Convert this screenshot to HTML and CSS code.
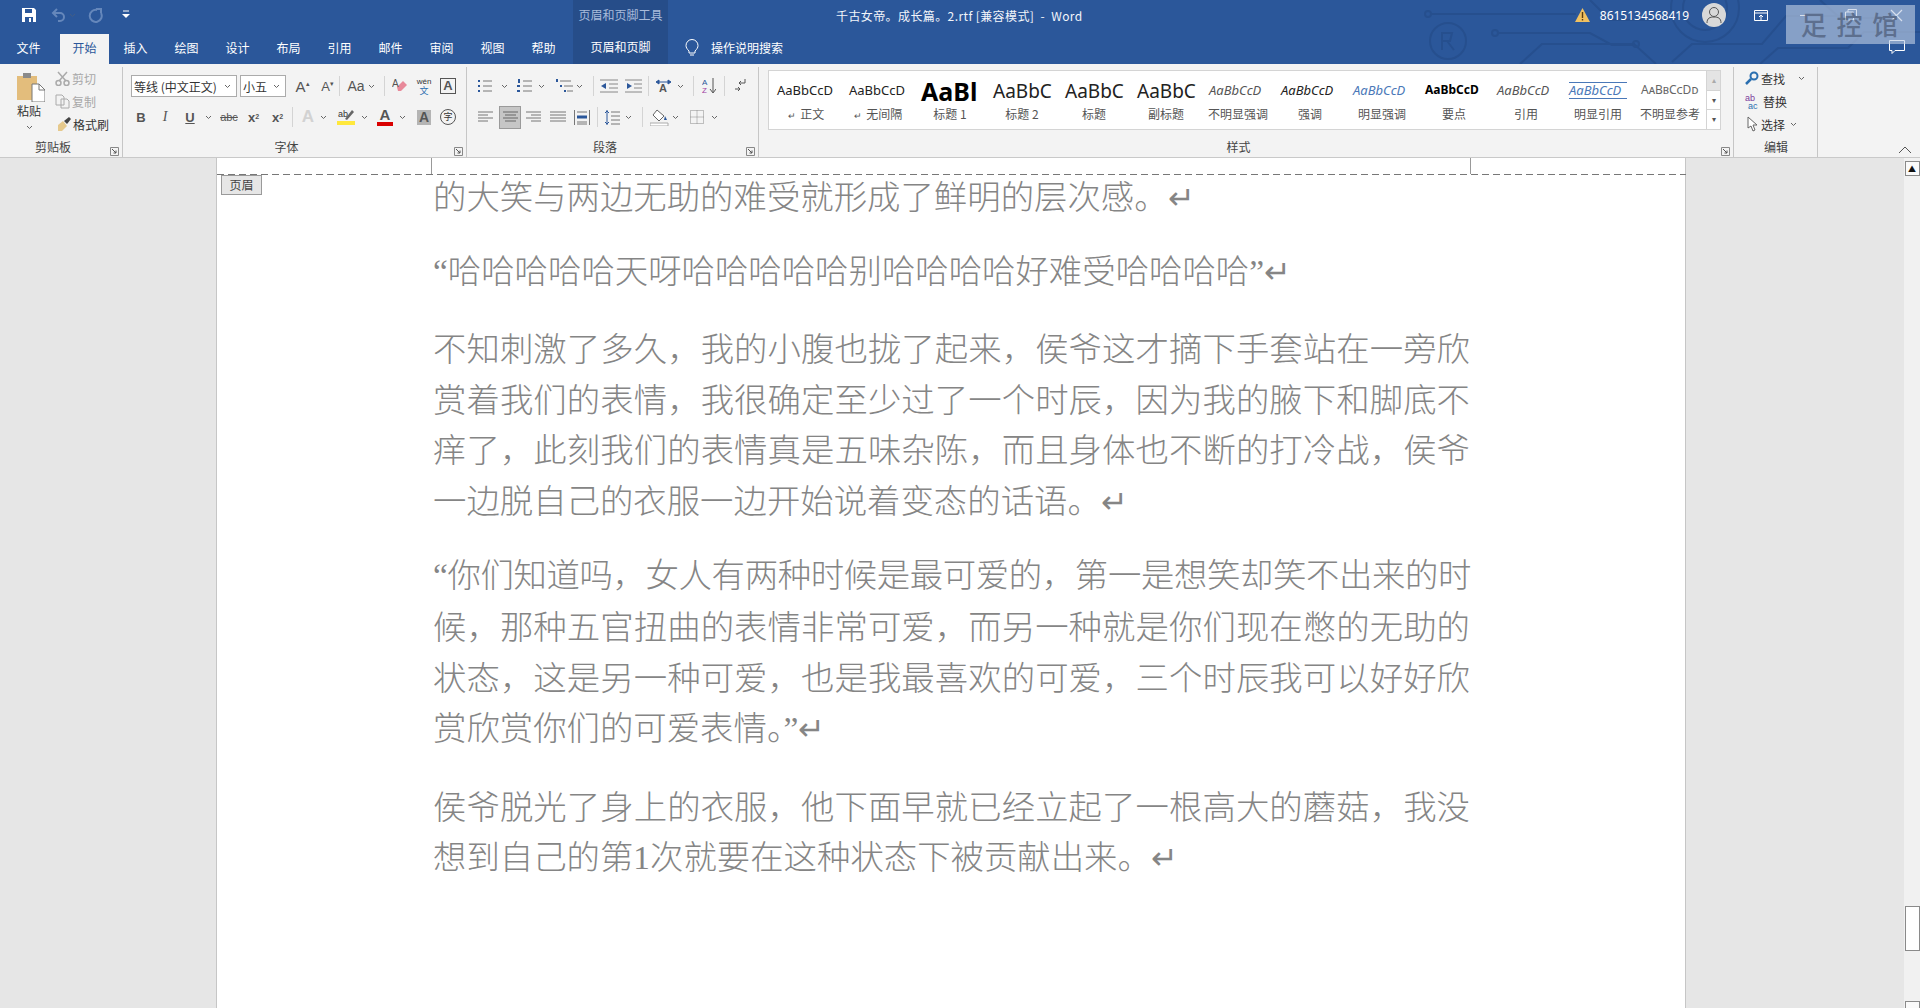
FILE: index.html
```html
<!DOCTYPE html>
<html lang="zh-CN">
<head>
  <meta charset="UTF-8">
  <title>千古女帝。成长篇。2.rtf [兼容模式] - Word</title>
  <link rel="stylesheet" href="styles.css">
</head>
<body>
  <svg class="defs" width="0" height="0">
    <symbol id="car" viewBox="0 0 7 7"><path d="M1 2l2.500 2.500L6 2" fill="none" stroke="#666" stroke-width="1"/></symbol>
    <symbol id="launch" viewBox="0 0 9 9"><path d="M.5 .5h8v8h-8z" fill="none" stroke="#888"/><path d="M2 2l4 4M6 3.500v2.500H3.500" fill="none" stroke="#555"/></symbol>
  </svg>

  <header class="top">
    <svg class="circuit" width="520" height="64" viewBox="0 0 520 64" fill="none" stroke="#264f8e" stroke-width="2">
      <circle cx="28" cy="14" r="3"/><path d="M31 14h145"/>
      <circle cx="48" cy="41" r="18"/><path d="M42 50V33h10l-2 8h-8M47 41l7 9"/>
      <circle cx="95" cy="33" r="3"/><path d="M98 33h92l22 12h22"/>
      <path d="M120 64l22-20h92l22 20"/><circle cx="236" cy="44" r="3"/>
      <circle cx="305" cy="8" r="22"/><circle cx="305" cy="8" r="34"/>
      <path d="M190 0l20 20h60M272 62l20-18h70l24-28h70M360 64l18-16h70l16-16h56M420 0l20 18h60"/>
    </svg>

    <div class="title-row">
      <div class="qat">
        <svg class="qat-save" width="16" height="16" viewBox="0 0 16 16"><path d="M1 1h12l2 2v12H1z" fill="#fff"/><path d="M4 2h7v4H4z" fill="#2b579a"/><path d="M4 10h8v5H4z" fill="#2b579a"/><path d="M8 11h2v4H8z" fill="#fff"/></svg>
        <svg class="qat-undo" width="16" height="14" viewBox="0 0 16 14" fill="none" stroke="#6587bb" stroke-width="2"><path d="M6 1L2 5l4 4"/><path d="M3 5h6a4 4 0 0 1 0 8H7"/></svg>
        <svg class="qat-car" width="7" height="7"><use href="#car"/></svg>
        <svg class="qat-redo" width="15" height="15" viewBox="0 0 15 15" fill="none" stroke="#6587bb" stroke-width="2"><path d="M9 2a6 6 0 1 0 4 3"/><path d="M8 1h5v4"/></svg>
        <svg class="qat-more" width="8" height="10" viewBox="0 0 8 10"><path d="M1 1h6" stroke="#fff"/><path d="M0 4h8L4 8z" fill="#fff"/></svg>
      </div>
      <div class="tool-label">页眉和页脚工具</div>
      <div class="doc-title">千古女帝。成长篇。2.rtf [兼容模式]&nbsp; -&nbsp; Word</div>
      <div class="account">
        <svg width="15" height="14" viewBox="0 0 15 14"><path d="M7.500 0L15 14H0z" fill="#f0c060"/><path d="M6.800 4h1.400v6H6.800zM6.800 11h1.400v1.500H6.800z" fill="#5a3c10"/></svg>
        <span class="phone">8615134568419</span>
        <span class="avatar"><svg width="16" height="18" viewBox="0 0 16 18" fill="none" stroke="#555"><circle cx="8" cy="6" r="4.500"/><path d="M1 17c0-5 3-6 7-6s7 1 7 6"/></svg></span>
        <svg class="display-btn" width="14" height="11" viewBox="0 0 14 11" fill="none" stroke="#fff"><path d="M.5 .5h13v10H.5zM.5 3h13M7 5v5M5 7l2-2 2 2"/></svg>
        <div class="win-btns">
          <span class="win-min"></span>
          <svg width="12" height="12" viewBox="0 0 12 12" fill="none" stroke="#fff"><path d="M.5 3h8v8h-8zM3 3V.5h8.500V8H9"/></svg>
          <svg width="13" height="13" viewBox="0 0 13 13" stroke="#fff" stroke-width="1.200"><path d="M1 1l11 11M12 1L1 12"/></svg>
        </div>
      </div>
    </div>

    <nav class="tab-row">
      <span class="tab tab-file">文件</span>
      <span class="tab tab-active">开始</span>
      <span class="tab">插入</span>
      <span class="tab">绘图</span>
      <span class="tab">设计</span>
      <span class="tab">布局</span>
      <span class="tab">引用</span>
      <span class="tab">邮件</span>
      <span class="tab">审阅</span>
      <span class="tab">视图</span>
      <span class="tab">帮助</span>
      <span class="tab tab-tool">页眉和页脚</span>
      <svg class="bulb" width="14" height="18" viewBox="0 0 14 18" fill="none" stroke="#fff"><path d="M4 12C2 10 1 8.500 1 6.500a6 6 0 0 1 12 0C13 8.500 12 10 10 12v2H4zM5 16h4"/></svg>
      <span class="search">操作说明搜索</span>
      <svg class="comment" width="16" height="15" viewBox="0 0 16 15" fill="none" stroke="#fff"><path d="M.5 .5h15v10H6l-3 3v-3H.5z"/></svg>
    </nav>
    <div class="stamp">足 控 馆</div>
  </header>

  <section class="ribbon">
    <div class="group g-clip">
      <div class="g-body clip-body">
        <div class="paste">
          <svg width="28" height="30" viewBox="0 0 28 30"><path d="M0 4h20v24H0z" fill="#e3bd7c"/><path d="M6 1h8v5H6z" fill="#8a8a8a"/><path d="M15 12h7l6 6v12H15z" fill="#fff" stroke="#777"/><path d="M22 12v6h6" fill="none" stroke="#777"/></svg>
          <span class="paste-lab">粘贴</span>
          <svg width="7" height="7"><use href="#car"/></svg>
        </div>
        <div class="stack">
          <div class="mini off"><svg width="15" height="15" viewBox="0 0 15 15" fill="none" stroke="#aaa" stroke-width="1.500"><path d="M3 1l8 9M12 1L4 10"/><circle cx="3.500" cy="12" r="2.500"/><circle cx="11.500" cy="12" r="2.500"/></svg><span>剪切</span></div>
          <div class="mini off"><svg width="15" height="15" viewBox="0 0 15 15" fill="none" stroke="#aaa"><path d="M1 1h6l2 2v8H1zM6 5h6l2 2v7H6z"/></svg><span>复制</span></div>
          <div class="mini"><svg width="16" height="15" viewBox="0 0 16 15"><path d="M3 8l5-4 4 5-5 5H3z" fill="#e6c98c"/><path d="M9 4l5-4 2 2-4 5z" fill="#444"/></svg><span>格式刷</span></div>
        </div>
      </div>
      <div class="g-label">剪贴板</div>
      <svg class="launch" width="9" height="9"><use href="#launch"/></svg>
    </div>

    <div class="group g-font">
      <div class="g-body">
        <div class="row">
          <div class="select w106"><span>等线 (中文正文)</span><svg width="7" height="7"><use href="#car"/></svg></div>
          <div class="select w46 m3"><span>小五</span><svg width="7" height="7"><use href="#car"/></svg></div>
          <span class="glyph w15 m9 big">A<sup class="tri">▴</sup></span>
          <span class="glyph w15 m10">A<sup class="tri">▾</sup></span>
          <i class="sep m4"></i>
          <span class="glyph aa m7">Aa<svg width="7" height="7"><use href="#car"/></svg></span>
          <i class="sep m9"></i>
          <svg class="m7" width="16" height="16" viewBox="0 0 16 16"><path d="M5 9l6-6 4 4-6 6H6z" fill="#e8899a"/><text x="0" y="9" class="eraser-a">A</text></svg>
          <span class="wen m8"><b>wén</b><em>文</em></span>
          <span class="boxa m8">A</span>
        </div>
        <div class="row">
          <span class="glyph w10 m5 bold">B</span>
          <span class="glyph w10 m14 ital">I</span>
          <span class="glyph w10 m15 bold under">U</span>
          <svg class="m10" width="7" height="7"><use href="#car"/></svg>
          <span class="glyph w16 m9 abc">abc</span>
          <span class="glyph w13 m10 bold">x<sub>2</sub></span>
          <span class="glyph w13 m11 bold">x<sup>2</sup></span>
          <i class="sep m8"></i>
          <span class="glyph w14 m8 ghost">A</span>
          <svg class="m5" width="7" height="7"><use href="#car"/></svg>
          <svg class="m10" width="18" height="18" viewBox="0 0 18 18"><path d="M0 13h18v4H0z" fill="#ffe83c"/><text x="1" y="9" class="hl-text">ab</text><path d="M8 11l7-9 2 2-7 8z" fill="#666"/></svg>
          <svg class="m6" width="7" height="7"><use href="#car"/></svg>
          <span class="glyph w16 m9 red-a">A</span>
          <svg class="m6" width="7" height="7"><use href="#car"/></svg>
          <span class="glyph w14 m11 gray-a">A</span>
          <span class="ring m9">字</span>
        </div>
      </div>
      <div class="g-label">字体</div>
      <svg class="launch" width="9" height="9"><use href="#launch"/></svg>
    </div>

    <div class="group g-para">
      <div class="g-body">
        <div class="row">
          <svg class="w14" width="14" height="14" viewBox="0 0 14 14" stroke="#777"><path d="M5 2h9M5 7h9M5 12h9"/><path d="M0 1h2v2H0zM0 6h2v2H0zM0 11h2v2H0z" fill="#2b579a" stroke="none"/></svg>
          <svg class="m9" width="7" height="7"><use href="#car"/></svg>
          <svg class="m9" width="15" height="14" viewBox="0 0 15 14" stroke="#777"><path d="M6 2h9M6 7h9M6 12h9"/><path d="M1 0h2v4H1zM0 6h3v2H0zM0 11h3v2H0z" fill="#2b579a" stroke="none"/></svg>
          <svg class="m6" width="7" height="7"><use href="#car"/></svg>
          <svg class="m11" width="17" height="14" viewBox="0 0 17 14" stroke="#777"><path d="M4 2h11M8 7h9M11 12h6"/><path d="M0 0h2v3H0zM4 6h2v2H4zM8 11h2v2H8z" fill="#2b579a" stroke="none"/></svg>
          <svg class="m3" width="7" height="7"><use href="#car"/></svg>
          <i class="sep m10"></i>
          <svg class="m6" width="18" height="14" viewBox="0 0 18 14" stroke="#888"><path d="M0 1h18M9 5h9M9 9h9M0 13h18"/><path d="M6 4L1 7l5 3z" fill="#2b579a" stroke="none"/></svg>
          <svg class="m7" width="17" height="14" viewBox="0 0 17 14" stroke="#888"><path d="M0 1h17M9 5h8M9 9h8M0 13h17"/><path d="M2 4l5 3-5 3z" fill="#2b579a" stroke="none"/></svg>
          <i class="sep m6"></i>
          <svg class="m6" width="17" height="14" viewBox="0 0 17 14"><text x="4" y="13" class="dir-a">A</text><path d="M1 3l3-2v4zM16 3l-3-2v4zM4 3h9" fill="#2b579a" stroke="#2b579a"/></svg>
          <svg class="m5" width="7" height="7"><use href="#car"/></svg>
          <i class="sep m9"></i>
          <svg class="m8" width="14" height="16" viewBox="0 0 14 16"><text x="0" y="7" class="sort-a">A</text><text x="0" y="15" class="sort-z">Z</text><path d="M11 0v14M8 11l3 4 3-4" fill="none" stroke="#555"/></svg>
          <i class="sep m8"></i>
          <svg class="m10" width="11" height="14" viewBox="0 0 11 14" fill="none" stroke="#555"><path d="M10 0v4H4M6 2L4 4l2 2M0 10h5M3 8l2 2-2 2"/></svg>
        </div>
        <div class="row">
          <svg class="w15" width="15" height="12" viewBox="0 0 15 12" stroke="#777"><path d="M0 1h15M0 4h10M0 7h15M0 10h10"/></svg>
          <span class="align-on m6"><svg width="15" height="12" viewBox="0 0 15 12" stroke="#666"><path d="M0 1h15M2 4h11M0 7h15M2 10h11"/></svg></span>
          <svg class="m5" width="15" height="12" viewBox="0 0 15 12" stroke="#777"><path d="M0 1h15M5 4h10M0 7h15M5 10h10"/></svg>
          <svg class="m9" width="16" height="12" viewBox="0 0 16 12" stroke="#777"><path d="M0 1h16M0 4h16M0 7h16M0 10h16"/></svg>
          <svg class="m8" width="16" height="15" viewBox="0 0 16 15" stroke="#777" fill="none"><path d="M.5 0v15M15.500 0v15M3 2h10M3 12h10M3 14h10"/><path d="M3 7h10" stroke="#2b579a" stroke-width="3"/></svg>
          <i class="sep m7"></i>
          <svg class="m7" width="15" height="15" viewBox="0 0 15 15" fill="none"><path d="M6 2h9M6 6h9M6 10h9M6 14h9" stroke="#777"/><path d="M2 0v15M0 3l2-2 2 2M0 12l2 2 2-2" stroke="#2b579a"/></svg>
          <svg class="m5" width="7" height="7"><use href="#car"/></svg>
          <i class="sep m10"></i>
          <svg class="m7" width="20" height="17" viewBox="0 0 20 17"><path d="M7 1l7 6-5 5-6-6z" fill="#fff" stroke="#666"/><path d="M15 7l2 4-3 0z" fill="#2b579a"/><path d="M0 14h18v3H0z" fill="#fff" stroke="#aaa"/></svg>
          <svg class="m2" width="7" height="7"><use href="#car"/></svg>
          <svg class="m11" width="14" height="14" viewBox="0 0 14 14" fill="none" stroke="#888" stroke-dasharray="1 1"><path d="M.5 .5h13v13H.5zM7 .5v13M.5 7h13"/></svg>
          <svg class="m7" width="7" height="7"><use href="#car"/></svg>
        </div>
      </div>
      <div class="g-label">段落</div>
      <svg class="launch" width="9" height="9"><use href="#launch"/></svg>
    </div>

    <div class="group g-style">
      <div class="g-body">
        <div class="gallery">
          <div class="style-item"><span class="pv">AaBbCcD</span><span class="nm"><i>↵</i> 正文</span></div>
          <div class="style-item"><span class="pv">AaBbCcD</span><span class="nm"><i>↵</i> 无间隔</span></div>
          <div class="style-item"><span class="pv pv-h1">AaBl</span><span class="nm">标题 1</span></div>
          <div class="style-item"><span class="pv pv-h2">AaBbC</span><span class="nm">标题 2</span></div>
          <div class="style-item"><span class="pv pv-h2">AaBbC</span><span class="nm">标题</span></div>
          <div class="style-item"><span class="pv pv-h2">AaBbC</span><span class="nm">副标题</span></div>
          <div class="style-item"><span class="pv pv-it gray">AaBbCcD</span><span class="nm">不明显强调</span></div>
          <div class="style-item"><span class="pv pv-it">AaBbCcD</span><span class="nm">强调</span></div>
          <div class="style-item"><span class="pv pv-it blue">AaBbCcD</span><span class="nm">明显强调</span></div>
          <div class="style-item"><span class="pv pv-b">AaBbCcD</span><span class="nm">要点</span></div>
          <div class="style-item"><span class="pv pv-it gray">AaBbCcD</span><span class="nm">引用</span></div>
          <div class="style-item"><span class="pv pv-it blue lined">AaBbCcD</span><span class="nm">明显引用</span></div>
          <div class="style-item"><span class="pv pv-sc">AaBbCcDd</span><span class="nm">不明显参考</span></div>
          <div class="gallery-btns">
            <span class="off-btn">▴</span>
            <span>▾</span>
            <span>▾</span>
          </div>
        </div>
      </div>
      <div class="g-label">样式</div>
      <svg class="launch" width="9" height="9"><use href="#launch"/></svg>
    </div>

    <div class="group g-edit">
      <div class="g-body stack edit-stack">
        <div class="mini"><svg width="14" height="14" viewBox="0 0 14 14" fill="none" stroke="#2b6fb0" stroke-width="2"><circle cx="9" cy="5" r="3.500"/><path d="M6 8l-5 5" stroke-width="2.500"/></svg><span>查找</span><svg class="m11" width="7" height="7"><use href="#car"/></svg></div>
        <div class="mini"><svg width="16" height="15" viewBox="0 0 16 15"><text x="0" y="7" class="rep-ab">ab</text><text x="3" y="15" class="rep-ac">ac</text></svg><span>替换</span></div>
        <div class="mini"><svg width="14" height="16" viewBox="0 0 14 16"><path d="M3 1v11l3-2 2 5 2-1-2-5h4z" fill="#fff" stroke="#666"/></svg><span>选择</span><svg class="m3" width="7" height="7"><use href="#car"/></svg></div>
      </div>
      <div class="g-label">编辑</div>
    </div>

    <svg class="collapse" width="14" height="8" viewBox="0 0 14 8" fill="none" stroke="#555"><path d="M1 7l6-6 6 6"/></svg>
  </section>

  <main class="workspace">
    <div class="gutter"></div>
    <article class="page">
      <div class="header-strip">
        <span class="tick"></span>
      </div>
      <span class="header-tag">页眉</span>
      <div class="doc-text">
        <p><span class="last">的大笑与两边无助的难受就形成了鲜明的层次感。<i>↵</i></span></p>
        <p class="wide"><span class="last">“哈哈哈哈哈天呀哈哈哈哈哈别哈哈哈哈好难受哈哈哈哈”<i>↵</i></span></p>
        <p>
          <span>不知刺激了多久，我的小腹也拢了起来，侯爷这才摘下手套站在一旁欣</span>
          <span>赏着我们的表情，我很确定至少过了一个时辰，因为我的腋下和脚底不</span>
          <span>痒了，此刻我们的表情真是五味杂陈，而且身体也不断的打冷战，侯爷</span>
          <span class="last">一边脱自己的衣服一边开始说着变态的话语。<i>↵</i></span>
        </p>
        <p class="wide">
          <span class="tight">“你们知道吗，女人有两种时候是最可爱的，第一是想笑却笑不出来的时</span>
          <span>候，那种五官扭曲的表情非常可爱，而另一种就是你们现在憋的无助的</span>
          <span>状态，这是另一种可爱，也是我最喜欢的可爱，三个时辰我可以好好欣</span>
          <span class="last">赏欣赏你们的可爱表情。”<i>↵</i></span>
        </p>
        <p>
          <span>侯爷脱光了身上的衣服，他下面早就已经立起了一根高大的蘑菇，我没</span>
          <span class="last">想到自己的第1次就要在这种状态下被贡献出来。<i>↵</i></span>
        </p>
      </div>
    </article>
    <div class="gutter-r"></div>
    <aside class="scrollbar">
      <span class="sb-btn">▲</span>
      <span class="sb-thumb"></span>
      <span class="sb-btn sb-down">▬</span>
    </aside>
  </main>
</body>
</html>
```

FILE: styles.css
```css
* {
  box-sizing: border-box;
}

html, body {
  margin: 0;
  height: 100%;
}

body {
  display: flex;
  flex-direction: column;
  overflow: hidden;
  font-family: "Noto Sans CJK SC", "Noto Sans", sans-serif;
  font-size: 12px;
  color: #333;
  background-color: #e6e6e6;
}

.defs {
  position: absolute;
}

svg {
  flex: none;
  display: block;
}

/* title bar */
.top {
  position: relative;
  height: 64px;
  flex: none;
  background-color: #2b579a;
  color: #fff;
  overflow: hidden;
}

.circuit {
  position: absolute;
  left: 1400px;
  top: 0;
}

.title-row, .tab-row {
  position: relative;
  display: flex;
  align-items: center;
  height: 32px;
}

.title-row { padding-bottom: 2px; }
.tab-row { padding-bottom: 1px; }

.qat {
  display: flex;
  align-items: center;
  width: 573px;
  padding-left: 21px;
}

.qat-undo { margin-left: 14px; }
.qat-car { margin-left: 2px; opacity: .4; }
.qat-redo { margin-left: 12px; }
.qat-more { margin-left: 19px; }

.tool-label {
  width: 95px;
  height: 32px;
  margin-bottom: -2px;
  line-height: 30px;
  text-align: center;
  color: #a9bcdb;
  background-color: #264d89;
  white-space: nowrap;
}

.doc-title {
  margin-left: 168px;
  letter-spacing: .4px;
  color: #f2f5fa;
  white-space: nowrap;
}

.account {
  display: flex;
  align-items: center;
  margin-left: auto;
  padding-right: 17px;
}

.phone {
  margin-left: 10px;
  font-family: "Noto Sans", sans-serif;
}

.avatar {
  display: flex;
  align-items: center;
  justify-content: center;
  width: 24px;
  height: 24px;
  margin-left: 13px;
  border-radius: 50%;
  background-color: #d8d8d8;
}

.display-btn { margin-left: 28px; }

.win-btns {
  display: flex;
  align-items: center;
  gap: 33px;
  margin-left: 32px;
}

.win-min {
  width: 12px;
  height: 1px;
  background-color: #fff;
}

.tab {
  width: 51px;
  text-align: center;
  white-space: nowrap;
}

.tab-file { margin: 0 6px 0 3px; }

.tab-active {
  width: 49px;
  height: 30px;
  margin: 3px 1px 0 0;
  line-height: 28px;
  background-color: #f3f3f3;
  color: #2b579a;
}

.tab-tool {
  width: 95px;
  height: 32px;
  margin: 1px 0 0 4px;
  line-height: 30px;
  background-color: #264d89;
}

.bulb { margin-left: 17px; }
.search { margin-left: 12px; }
.comment { margin-left: auto; margin-right: 15px; }

.stamp {
  position: absolute;
  left: 1786px;
  top: 5px;
  width: 129px;
  height: 39px;
  text-align: center;
  font-size: 26px;
  font-weight: 500;
  letter-spacing: 2px;
  line-height: 38px;
  color: #5d6f8e;
  background-color: rgba(190, 205, 228, .62);
  white-space: nowrap;
}

/* ribbon */
.ribbon {
  position: relative;
  display: flex;
  height: 94px;
  flex: none;
  background-color: #f3f3f3;
  border-bottom: 1px solid #c9c9c9;
}

.group {
  position: relative;
  display: flex;
  flex-direction: column;
  height: 90px;
  margin-top: 3px;
  border-right: 1px solid #c6c6c6;
}

.g-body {
  padding-top: 8px;
  height: 72px;
}

.g-label {
  text-align: center;
  line-height: 16px;
  color: #444;
}

.launch {
  position: absolute;
  right: 3px;
  bottom: 1px;
}

.g-clip { width: 123px; }
.g-font { width: 344px; padding-left: 8px; }
.g-para { width: 292px; padding-left: 11px; }
.g-style { width: 975px; padding-left: 9px; }
.g-edit { width: 84px; padding-left: 11px; }

.g-clip .g-label { padding-right: 16px; }
.g-font .g-label { padding-right: 24px; }
.g-para .g-label { padding-right: 26px; }
.g-style .g-label { padding-right: 24px; }
.g-edit .g-label { padding-right: 10px; }

.clip-body {
  display: flex;
  padding-left: 17px;
  padding-top: 5px;
}

.paste {
  display: flex;
  flex-direction: column;
  align-items: flex-start;
  width: 38px;
}

.paste svg:last-child { margin: 5px 0 0 9px; }
.paste-lab { margin-top: 1px; line-height: 16px; }

.stack {
  display: flex;
  flex-direction: column;
  gap: 3px;
}

.clip-body .stack { margin-top: -4px; }

.mini {
  display: flex;
  align-items: center;
  gap: 2px;
  height: 20px;
  white-space: nowrap;
}

.mini.off { color: #a8a8a8; }

.edit-stack {
  padding-top: 1px;
  padding-left: 0;
}

.row {
  display: flex;
  align-items: center;
  height: 22px;
  margin-top: 9px;
  white-space: nowrap;
}

.row:first-child { margin-top: 0; }

.select {
  display: flex;
  align-items: center;
  justify-content: space-between;
  height: 22px;
  padding: 0 5px 0 2px;
  background-color: #fff;
  border: 1px solid #ababab;
}

.w106 { width: 106px; }
.w46 { width: 46px; }
.w10 { width: 10px; }
.w13 { width: 13px; }
.w14 { width: 14px; }
.w15 { width: 15px; }
.w16 { width: 16px; }

.m2 { margin-left: 2px; }
.m3 { margin-left: 3px; }
.m4 { margin-left: 4px; }
.m5 { margin-left: 5px; }
.m6 { margin-left: 6px; }
.m7 { margin-left: 7px; }
.m8 { margin-left: 8px; }
.m9 { margin-left: 9px; }
.m10 { margin-left: 10px; }
.m11 { margin-left: 11px; }
.m14 { margin-left: 14px; }
.m15 { margin-left: 15px; }

.sep {
  width: 1px;
  height: 20px;
  background-color: #d4d4d4;
}

.glyph {
  display: inline-flex;
  align-items: center;
  justify-content: center;
  font-family: "Liberation Sans", sans-serif;
  font-size: 13px;
  color: #555;
}

.glyph sub, .glyph sup {
  font-size: 7px;
  line-height: 0;
}

.big { font-size: 15px; }
.tri { font-size: 8px; margin-top: -4px; }
.aa { width: 28px; font-size: 14px; gap: 3px; }
.bold { font-weight: bold; }
.ital { font-style: italic; font-family: "Liberation Serif", serif; font-size: 14px; }
.under { text-decoration: underline; }
.abc { font-size: 11px; text-decoration: line-through; }
.ghost { font-size: 17px; font-weight: bold; color: #d2d2d2; }
.red-a { font-size: 15px; font-weight: bold; border-bottom: 4px solid #d90000; height: 18px; line-height: 14px; }
.gray-a { height: 15px; font-size: 14px; font-weight: bold; background-color: #b4b4b4; }

.eraser-a { font: 10px "Liberation Sans", sans-serif; fill: #555; }
.hl-text { font: 9px "Liberation Sans", sans-serif; fill: #333; }
.dir-a { font: bold 11px "Liberation Sans", sans-serif; fill: #555; }
.sort-a { font: 8px "Liberation Sans", sans-serif; fill: #2b579a; }
.sort-z { font: 8px "Liberation Sans", sans-serif; fill: #a03aa0; }
.rep-ab { font: 9px "Liberation Sans", sans-serif; fill: #7c3d9c; }
.rep-ac { font: 9px "Liberation Sans", sans-serif; fill: #2b6fb0; }

.wen {
  display: flex;
  flex-direction: column;
  align-items: center;
  width: 16px;
  line-height: 9px;
}

.wen b {
  font: 8px "Liberation Sans", sans-serif;
}

.wen em {
  font-style: normal;
  font-size: 9px;
  color: #2b6fb0;
}

.boxa {
  width: 16px;
  height: 16px;
  border: 1px solid #555;
  font: bold 13px/14px "Liberation Sans", sans-serif;
  text-align: center;
  color: #555;
}

.ring {
  width: 16px;
  height: 16px;
  border: 1px solid #555;
  border-radius: 50%;
  font-size: 9px;
  line-height: 14px;
  text-align: center;
}

.align-on {
  display: flex;
  align-items: center;
  justify-content: center;
  width: 22px;
  height: 23px;
  background-color: #c6c6c6;
  border: 1px solid #9a9a9a;
}

.gallery {
  display: flex;
  width: 953px;
  height: 60px;
  margin-top: -5px;
  background-color: #fff;
  border: 1px solid #d4d4d4;
  padding-left: 1px;
}

.style-item {
  display: flex;
  flex-direction: column;
  align-items: center;
  width: 72px;
  padding-top: 7px;
}

.pv {
  display: block;
  width: 58px;
  height: 26px;
  font-family: "Noto Sans", sans-serif;
  font-size: 13px;
  line-height: 24px;
  white-space: nowrap;
  color: #222;
}

.pv-h1 { font-size: 25px; font-weight: bold; color: #000; line-height: 26px; }
.pv-h2 { font-size: 19px; line-height: 26px; }
.pv-it { font-style: italic; }
.pv-b { font-size: 12px; font-weight: bold; color: #000; }
.pv-sc { font-variant: small-caps; font-size: 12px; color: #666; }
.gray { color: #555; }
.blue { color: #4a78b8; }

.lined {
  height: 17px;
  margin: 4px 0 5px;
  line-height: 14px;
  border-top: 1px solid #4a78b8;
  border-bottom: 1px solid #4a78b8;
}

.nm {
  margin-top: 2px;
  line-height: 16px;
  color: #555;
  white-space: nowrap;
}

.nm i {
  font-style: normal;
  font-size: 9px;
  margin-right: 2px;
}

.gallery-btns {
  display: flex;
  flex-direction: column;
  width: 14px;
  margin-left: auto;
  border-left: 1px solid #d4d4d4;
}

.gallery-btns span {
  flex: 1;
  text-align: center;
  font-size: 8px;
  line-height: 18px;
  color: #555;
  border-bottom: 1px solid #d4d4d4;
}

.gallery-btns span:last-child { border-bottom: none; }
.gallery-btns .off-btn { background-color: #e4e4e4; color: #aaa; }

.collapse {
  position: absolute;
  right: 8px;
  bottom: 3px;
}

/* document */
.workspace {
  display: flex;
  flex: 1;
  min-height: 0;
  overflow: hidden;
}

.gutter { width: 216px; flex: none; }
.gutter-r { width: 218px; flex: none; }

.page {
  position: relative;
  width: 1470px;
  flex: none;
  background-color: #fff;
  border-left: 1px solid #c6c6c6;
  border-right: 1px solid #c6c6c6;
}

.header-strip {
  height: 17px;
  margin-right: -1px;
  padding-left: 214px;
  background: repeating-linear-gradient(to right, #777 0 7px, transparent 7px 11px) left bottom / 100% 1px no-repeat;
}

.tick {
  display: block;
  width: 1040px;
  height: 16px;
  border-left: 1px solid #999;
  border-right: 1px solid #999;
}

.header-tag {
  position: absolute;
  left: 4px;
  top: 17px;
  width: 41px;
  height: 20px;
  text-align: center;
  line-height: 18px;
  background-color: #e6e6e6;
  border: 1px solid #9a9a9a;
  color: #444;
}

.doc-text {
  width: 1037px;
  margin: -2.500px 0 0 216px;
  font-family: "Liberation Serif", "Noto Sans CJK SC", serif;
  font-size: 33.400px;
  line-height: 50.400px;
  font-weight: 300;
  color: #858585;
}

.doc-text p {
  margin: 0 0 24px;
}

.doc-text p.wide {
  margin-bottom: 28px;
}

.doc-text span {
  display: block;
  text-align: justify;
  text-align-last: justify;
  white-space: nowrap;
}

.doc-text .last {
  text-align-last: left;
}

.doc-text .tight {
  letter-spacing: -1.500px;
  margin-bottom: 2px;
}

.doc-text i {
  font-style: normal;
  font-size: 32px;
  line-height: 0;
}

/* scrollbar */
.scrollbar {
  display: flex;
  flex-direction: column;
  align-items: center;
  width: 16px;
  flex: none;
  padding-top: 3px;
  background-color: #f1f1f1;
}

.sb-btn {
  width: 15px;
  height: 15px;
  flex: none;
  text-align: center;
  font-size: 8px;
  line-height: 13px;
  color: #111;
  background-color: #fafafa;
  border: 1px solid #8a8a8a;
}

.sb-down { margin-bottom: -8px; }

.sb-thumb {
  width: 15px;
  height: 45px;
  flex: none;
  margin-top: auto;
  margin-bottom: 50px;
  background-color: #fff;
  border: 1px solid #8a8a8a;
}
```
